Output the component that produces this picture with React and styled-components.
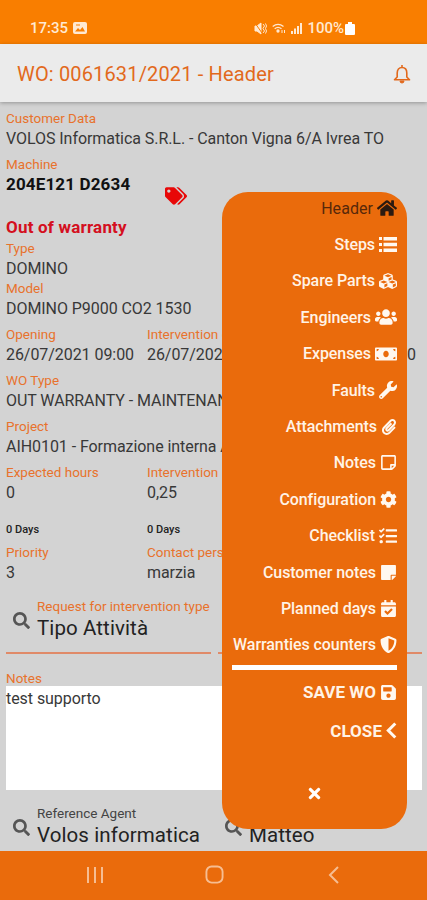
import React from "react";
import styled, { createGlobalStyle } from "styled-components";
import {
  FaCubes, FaUsers, FaMoneyBill, FaWrench, FaPaperclip,
  FaRegStickyNote, FaCog, FaTasks, FaStickyNote, FaCalendarCheck,
  FaShieldAlt, FaSave, FaTimes, FaTags, FaSearch, FaHome
} from "react-icons/fa";

const GlobalStyle = createGlobalStyle`
  * {
    box-sizing: border-box;
  }
  body {
    margin: 0;
    font-family: Roboto, "Liberation Sans", sans-serif;
  }
`;

const Screen = styled.div`
  position: relative;
  display: flex;
  flex-direction: column;
  width: 427px;
  height: 900px;
  overflow: hidden;
  background: #d3d3d3;
  white-space: nowrap;
`;

const StatusBar = styled.div`
  display: flex;
  align-items: center;
  justify-content: space-between;
  height: 44px;
  flex: none;
  padding: 12px 72px 0 30px;
  background: #f97e00;
  color: #ffe9d2;
  font-size: 15px;
  font-weight: 500;
  .time, .system {
    display: flex;
    align-items: center;
  }
  .time svg {
    margin-left: 5px;
  }
  .system svg {
    margin-right: 5px;
  }
  .system svg:last-child {
    margin: 0 0 0 1px;
  }
`;

const Header = styled.div`
  display: flex;
  align-items: center;
  justify-content: space-between;
  height: 58px;
  flex: none;
  padding: 2px 16px 0 17px;
  background: #ebebeb;
  box-shadow: 0 1px 4px rgba(0, 0, 0, 0.3);
  color: #e2691c;
  font-size: 20px;
  letter-spacing: 0.15px;
  z-index: 1;
`;

const Content = styled.div`
  display: flex;
  flex-direction: column;
  flex: 1;
  min-height: 0;
  overflow: hidden;
  padding: 6px 5px 0 6px;
  > div {
    flex-shrink: 0;
  }
`;

const Label = styled.div`
  height: 20px;
  line-height: 20px;
  font-size: 13.5px;
  color: ${p => (p.$dark ? "#444" : "#e8722c")};
`;

const Value = styled.div`
  height: ${p => (p.$short ? 20 : 21)}px;
  line-height: 21px;
  font-size: ${p => (p.$strong ? 17 : 16)}px;
  font-weight: ${p => (p.$strong ? 700 : 400)};
  letter-spacing: ${p => (p.$strong ? 0.15 : -0.06)}px;
  color: ${p => (p.$strong ? "#111" : "#383838")};
`;

const FieldBox = styled.div`
  margin-bottom: ${p => (p.$tight ? 0 : 5)}px;
`;

const Columns = styled.div`
  display: grid;
  grid-template-columns: 141px 141px 134px;
`;

const MachineRow = styled.div`
  display: flex;
  height: 63px;
  svg {
    margin: 31px 0 0 35px;
    color: #e80808;
  }
`;

const Warranty = styled.div`
  height: 21px;
  line-height: 20px;
  font-size: 17px;
  font-weight: 700;
  letter-spacing: 0.2px;
  color: #d40f20;
`;

const Days = styled.div`
  margin: 17px 0 2px;
  height: 20px;
  line-height: 20px;
  font-size: 11px;
  font-weight: 500;
  color: #222;
`;

const SearchRow = styled.div`
  display: grid;
  grid-template-columns: 205px 204px;
  column-gap: 7px;
  margin-top: 8px;
`;

const SearchField = styled.div`
  display: flex;
  height: 58px;
  padding-left: 7px;
  border-bottom: ${p => (p.$underline ? "2px solid #e08a68" : "none")};
  > svg {
    margin: 16px 7px 0 0;
    color: #555;
  }
`;

const Picked = styled.div`
  font-size: 20.5px;
  line-height: 24px;
  letter-spacing: 0.1px;
  color: #222;
`;

const NotesField = styled.div`
  margin: 14px 0 5px;
`;

const NotesBox = styled.div`
  height: 104px;
  margin-top: -2px;
  padding-top: 2px;
  background: #fff;
`;

const NavBar = styled.div`
  display: flex;
  align-items: center;
  gap: 101px;
  height: 49px;
  flex: none;
  padding: 0 0 2px 86px;
  background: #ea6b0c;
`;

const Menu = styled.div`
  position: absolute;
  left: 222px;
  top: 192px;
  width: 185px;
  height: 637px;
  padding: 0 10px;
  border-radius: 26px;
  background: #ea6b0c;
  z-index: 2;
`;

const MenuItem = styled.div`
  display: flex;
  align-items: center;
  justify-content: flex-end;
  gap: 4px;
  height: ${p => (p.$action ? 38.5 : 36.4)}px;
  font-size: ${p => (p.$action ? 17 : 16)}px;
  font-weight: ${p => (p.$action ? 700 : p.$current ? 400 : 500)};
  letter-spacing: ${p => (p.$action || p.$current ? 0.05 : -0.07)}px;
  color: ${p => (p.$current ? "#57280a" : "#fff3e6")};
  margin-top: ${p => (p.$current ? -2 : 0)}px;
  svg {
    color: ${p => (p.$current ? "#2b1a10" : "#fff8f0")};
  }
`;

const Divider = styled.div`
  height: 5px;
  margin: 2px 0 3px;
  background: #fff;
`;

const CloseMark = styled.div`
  display: flex;
  justify-content: center;
  margin-top: 35px;
  color: #fff;
`;

function StepsIcon() {
  return (
    <svg width="18" height="15" viewBox="0 0 18 15" fill="currentColor">
      <path d="M0 0h3v3H0zM0 6h3v3H0zM0 12h3v3H0zM4.500 0H18v3.500H4.500zM4.500 5.800H18v3.500H4.500zM4.500 11.500H18V15H4.500z" />
    </svg>
  );
}

function ChevronIcon() {
  return (
    <svg width="11" height="17" viewBox="0 0 11 17" fill="none" stroke="currentColor" strokeWidth="3">
      <path d="M9.300 1.500L2.300 8.500l7 7" />
    </svg>
  );
}

const menuItems = [
  { label: "Header", icon: <FaHome size={20} />, current: true },
  { label: "Steps", icon: <StepsIcon /> },
  { label: "Spare Parts", icon: <FaCubes size={18} /> },
  { label: "Engineers", icon: <FaUsers size={22} /> },
  { label: "Expenses", icon: <FaMoneyBill size={22} /> },
  { label: "Faults", icon: <FaWrench size={18} /> },
  { label: "Attachments", icon: <FaPaperclip size={16} /> },
  { label: "Notes", icon: <FaRegStickyNote size={17} /> },
  { label: "Configuration", icon: <FaCog size={17} /> },
  { label: "Checklist", icon: <FaTasks size={18} /> },
  { label: "Customer notes", icon: <FaStickyNote size={17} /> },
  { label: "Planned days", icon: <FaCalendarCheck size={17} /> },
  { label: "Warranties counters", icon: <FaShieldAlt size={17} /> },
];

function Field({ label, value, tight, strong }) {
  return (
    <FieldBox $tight={tight}>
      <Label>{label}</Label>
      <Value $short={tight} $strong={strong}>{value}</Value>
    </FieldBox>
  );
}

function Search({ label, value, underline, dark }) {
  return (
    <SearchField $underline={underline}>
      <FaSearch size={17} />
      <div>
        <Label $dark={dark}>{label}</Label>
        <Picked>{value}</Picked>
      </div>
    </SearchField>
  );
}

export default function App() {
  return (
    <Screen>
      <GlobalStyle />
      <StatusBar>
        <div className="time">
          17:35
          <svg width="14" height="12" viewBox="0 0 14 12">
            <rect width="14" height="12" rx="2" fill="#ffe9d2" />
            <path d="M2 9.500L5 6l2 2 2.500-3L12 9.500z" fill="#f97e00" />
            <path d="M3 3h4" stroke="#f97e00" />
          </svg>
        </div>
        <div className="system">
          <svg width="13" height="13" viewBox="0 0 13 13" fill="none" stroke="#ffe9d2">
            <path d="M1 4h2l4-3v11L3 9H1z" fill="#ffe9d2" />
            <path d="M1 1l7 10" stroke="#f97e00" />
            <path d="M9 2l1.500 2L9 6.500 10.500 9 9 11M11.500 1.500l1 2.500-1 2.500 1 2.500-1 2.500" />
          </svg>
          <svg width="14" height="13" viewBox="0 0 14 13" fill="none" stroke="#ffe9d2" strokeWidth="1.300">
            <path d="M.7 4.500Q6 .2 11.500 4.500M2.700 6.700Q6 4 9.500 6.700" />
            <circle cx="6" cy="9" r="1" fill="#ffe9d2" />
            <path d="M10 8v3M12.500 8v3" strokeWidth="1" />
          </svg>
          <svg width="11" height="12" viewBox="0 0 11 12" fill="#ffe9d2">
            <path d="M0 9h2v3H0zM3 6.500h2V12H3zM6 4h2v8H6zM9 1h2v11H9z" />
          </svg>
          100%
          <svg width="10" height="13" viewBox="0 0 10 13" fill="#fff">
            <path d="M3 0h4v2h2a1 1 0 0 1 1 1v9a1 1 0 0 1-1 1H1a1 1 0 0 1-1-1V3a1 1 0 0 1 1-1h2z" />
          </svg>
        </div>
      </StatusBar>
      <Header>
        WO: 0061631/2021 - Header
        <svg width="18" height="20" viewBox="0 0 18 20" fill="none" stroke="#e2691c" strokeWidth="1.600">
          <path d="M9 1v2M4.200 13V9C4.200 5.500 6 3.500 9 3.500S13.800 5.500 13.800 9v4l2.700 2.800h-15z" strokeLinejoin="round" />
          <path d="M7 17a2 2 0 0 0 4 0z" fill="#e2691c" strokeWidth="1" />
        </svg>
      </Header>
      <Content>
        <Field label="Customer Data" value="VOLOS Informatica S.R.L. - Canton Vigna 6/A Ivrea TO" />
        <MachineRow>
          <Field label="Machine" value="204E121 D2634" strong />
          <FaTags size={22} />
        </MachineRow>
        <Warranty>Out of warranty</Warranty>
        <Field label="Type" value="DOMINO" tight />
        <Field label="Model" value="DOMINO P9000 CO2 1530" />
        <Columns>
          <Field label="Opening" value="26/07/2021 09:00" />
          <Field label="Intervention date" value="26/07/2021 09:00" />
          <Field label="" value="26/07/2021 09:00" />
        </Columns>
        <Field label="WO Type" value="OUT WARRANTY - MAINTENANCE" />
        <Field label="Project" value="AIH0101 - Formazione interna A" />
        <Columns>
          <div>
            <Field label="Expected hours" value="0" />
            <Days>0 Days</Days>
            <Field label="Priority" value="3" />
          </div>
          <div>
            <Field label="Intervention hours" value="0,25" />
            <Days>0 Days</Days>
            <Field label="Contact person" value="marzia" />
          </div>
        </Columns>
        <SearchRow>
          <Search label="Request for intervention type" value="Tipo Attività" underline />
          <Search label="" value="" underline />
        </SearchRow>
        <NotesField>
          <Label>Notes</Label>
          <NotesBox>
            <Value>test supporto</Value>
          </NotesBox>
        </NotesField>
        <SearchRow>
          <Search label="Reference Agent" value="Volos informatica" dark />
          <Search label="" value="Matteo" dark />
        </SearchRow>
      </Content>
      <NavBar>
        <svg width="18" height="18" viewBox="0 0 18 18" stroke="#f6bd92" strokeWidth="2">
          <path d="M2 1v16M9 1v16M16 1v16" />
        </svg>
        <svg width="19" height="19" viewBox="0 0 20 20" fill="none" stroke="#f6bd92" strokeWidth="2">
          <rect x="1.500" y="1.500" width="17" height="17" rx="5.500" />
        </svg>
        <svg width="20" height="18" viewBox="-3 0 20 18" fill="none" stroke="#f6bd92" strokeWidth="2">
          <path d="M10 1L2 9l8 8" />
        </svg>
      </NavBar>
      <Menu>
        {menuItems.map(item =>
          <MenuItem key={item.label} $current={item.current}>
            {item.label} {item.icon}
          </MenuItem>
        )}
        <Divider />
        <MenuItem $action>SAVE WO <FaSave size={17} /></MenuItem>
        <MenuItem $action>CLOSE <ChevronIcon /></MenuItem>
        <CloseMark><FaTimes size={17} /></CloseMark>
      </Menu>
    </Screen>
  );
}
